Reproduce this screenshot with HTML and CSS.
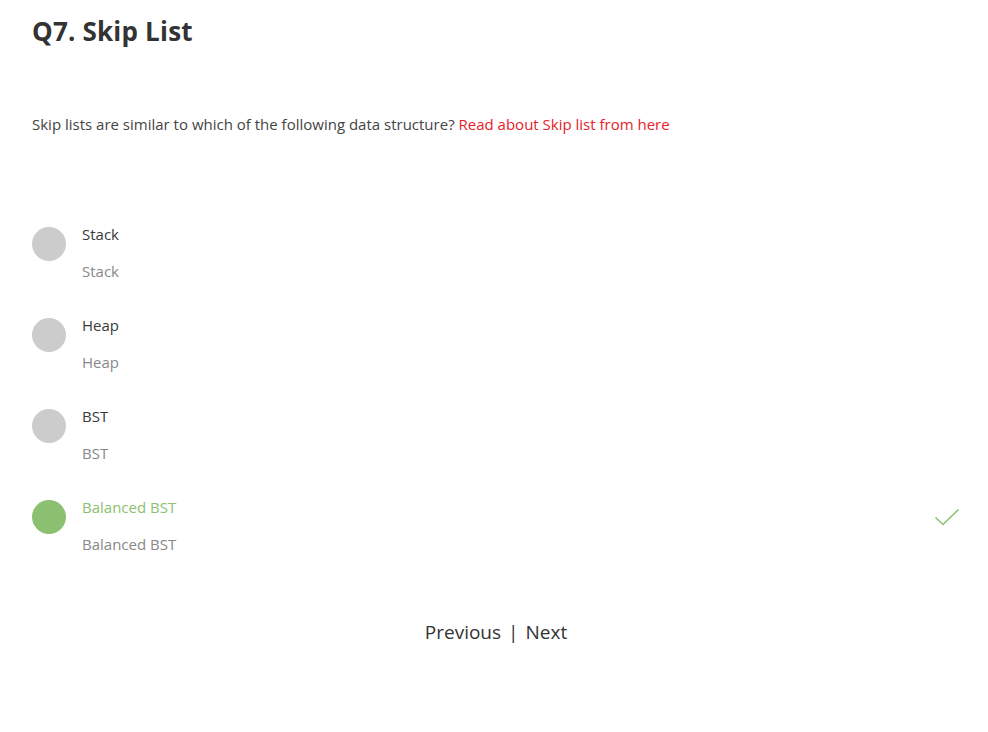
FILE: index.html
```html
<!DOCTYPE html>
<html>
<head>
<meta charset="utf-8">
<link rel="stylesheet" href="styles.css">
</head>
<body>
<main class="quiz">
  <h1 class="title">Q7. Skip List</h1>
  <p class="question">Skip lists are similar to which of the following data structure? <a class="link" href="#">Read about Skip list from here</a></p>
  <ul class="options">
    <li class="option">
      <span class="dot"></span>
      <div class="texts"><div class="label">Stack</div><div class="sub">Stack</div></div>
    </li>
    <li class="option">
      <span class="dot"></span>
      <div class="texts"><div class="label">Heap</div><div class="sub">Heap</div></div>
    </li>
    <li class="option">
      <span class="dot"></span>
      <div class="texts"><div class="label">BST</div><div class="sub">BST</div></div>
    </li>
    <li class="option correct">
      <span class="dot"></span>
      <div class="texts"><div class="label">Balanced BST</div><div class="sub">Balanced BST</div></div>
      <svg class="check" width="26" height="20" viewBox="0 0 26 20"><path d="M1.5 10.5 L9 17.5 L24.5 2.5" fill="none" stroke="#8cc071" stroke-width="1.6"/></svg>
    </li>
  </ul>
  <nav class="pager"><a href="#">Previous</a><span class="sep">|</span><a href="#">Next</a></nav>
</main>
</body>
</html>
```
FILE: styles.css
```css
html, body { margin: 0; padding: 0; background: #fff; }
body { font-family: "Open Sans", "Noto Sans", sans-serif; color: #333; }
.quiz { padding: 0 28px 0 32px; }
.title { margin: 0; padding-top: 12px; font-size: 26px; line-height: 38px; font-weight: 700; color: #333; letter-spacing: 0.2px; }
.question { margin: 63px 0 0; font-size: 15px; line-height: 22px; color: #444; }
.link { color: #e8212a; text-decoration: none; }
.options { list-style: none; margin: 89px 0 0; padding: 0; display: flex; flex-direction: column; gap: 34px; }
.option { display: flex; align-items: flex-start; }
.dot { width: 34px; height: 34px; border-radius: 50%; background: #cccccc; margin-top: 3px; flex: none; }
.texts { margin-left: 16px; flex: 1; }
.label { font-size: 15px; line-height: 20px; color: #3a3a3a; }
.sub { font-size: 15px; line-height: 20px; margin-top: 17px; color: #888; }
.correct .dot { background: #8cc071; }
.correct .label { color: #8cc071; }
.check { margin-top: 10px; flex: none; }
.pager { margin-top: 64px; text-align: center; font-size: 19px; line-height: 28px; color: #333; padding-left: 0; }
.pager a { color: #333; text-decoration: none; }
.sep { margin: 0 7px; }
```
